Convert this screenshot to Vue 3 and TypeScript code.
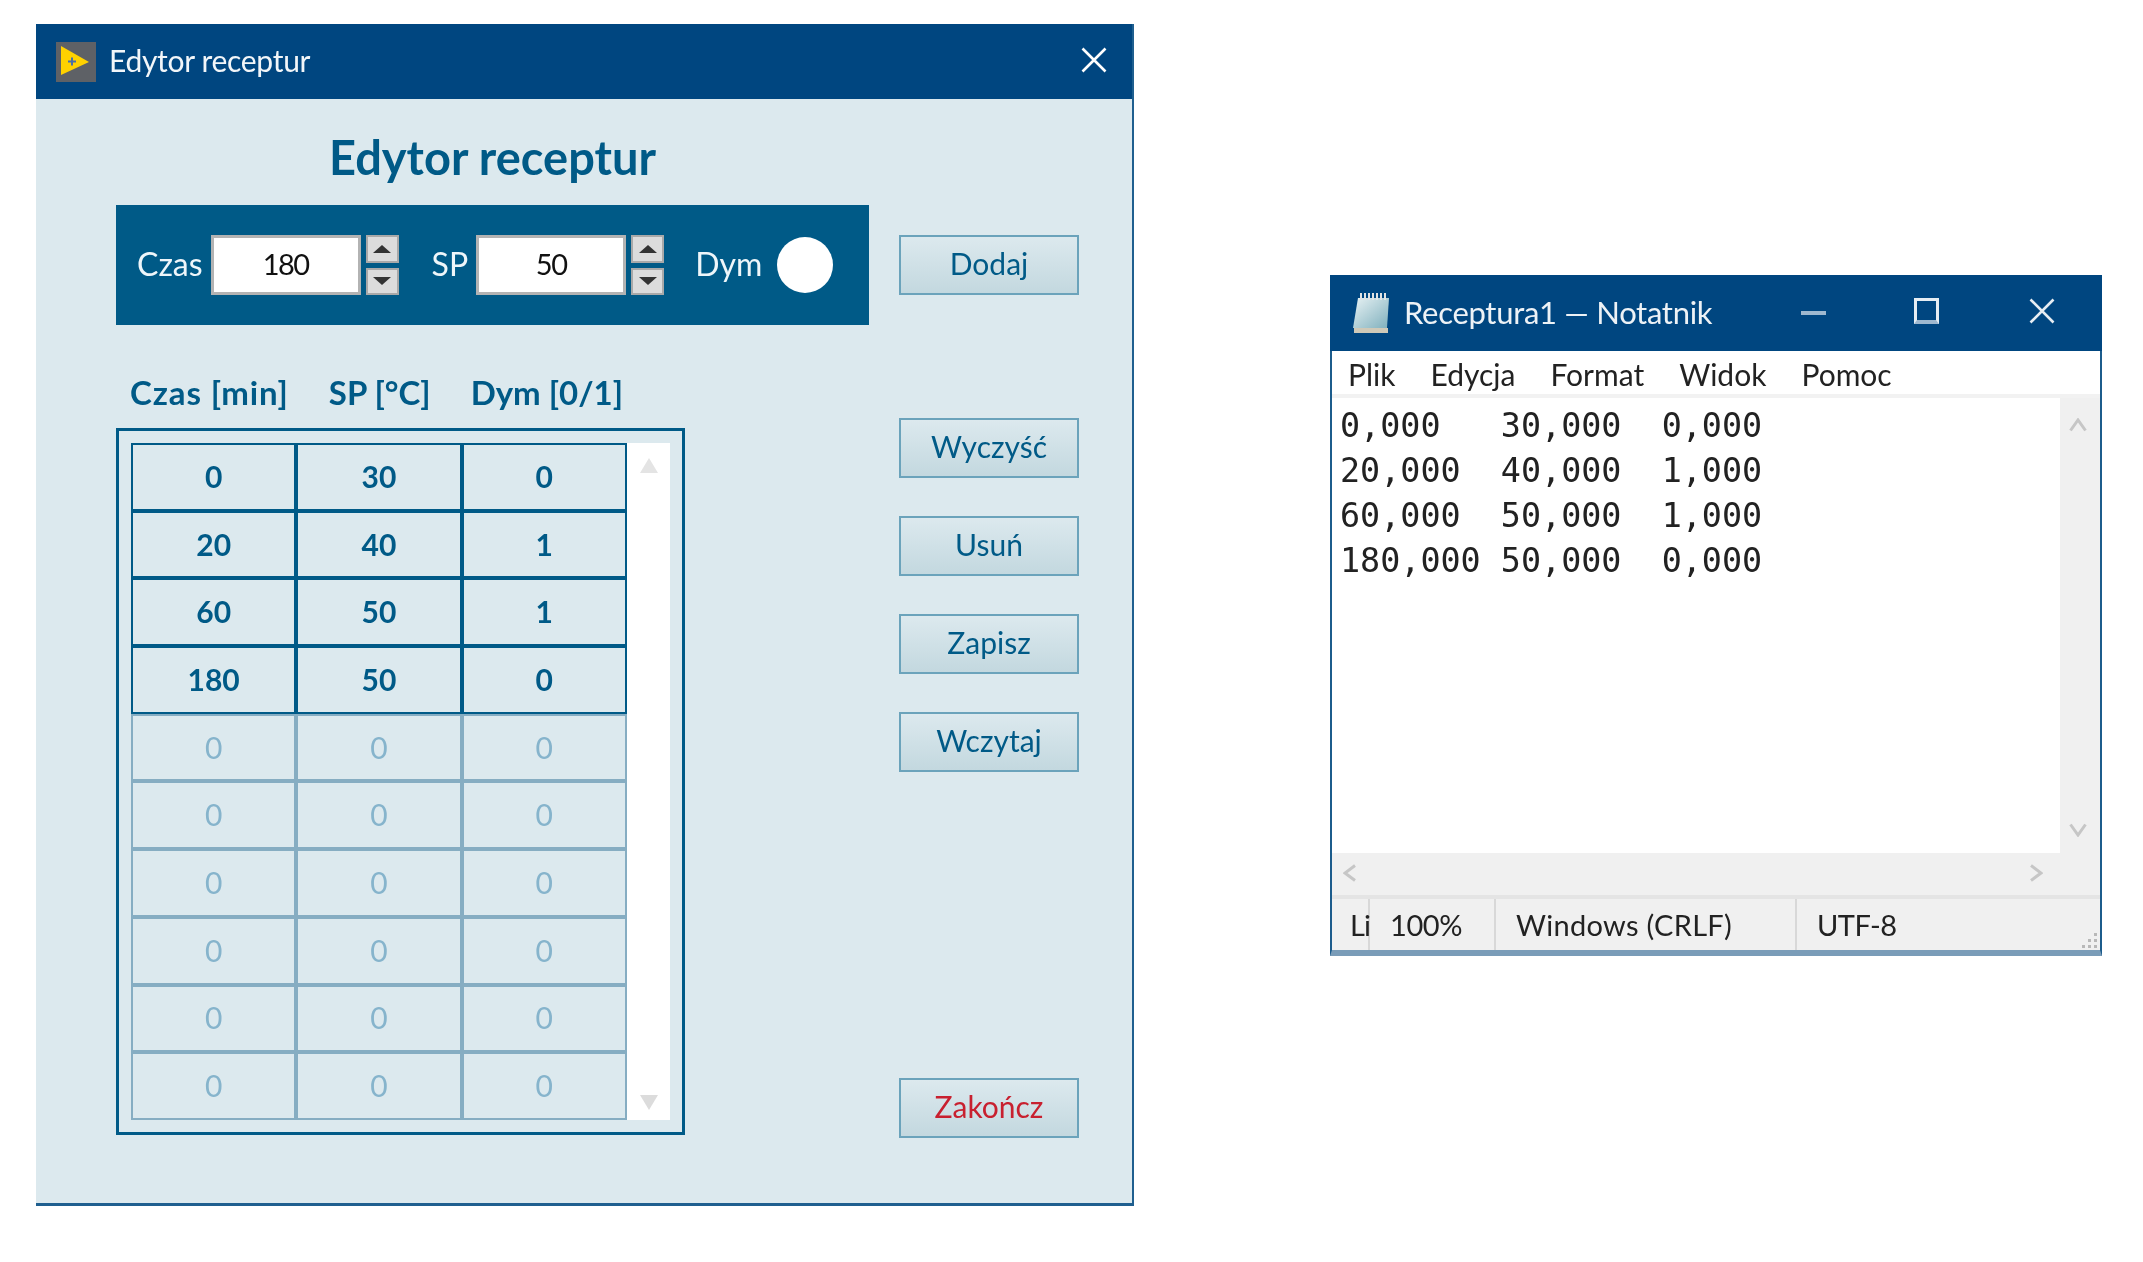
<script setup lang="ts">
interface Row {
  czas: number;
  sp: number;
  dym: number;
}

const filled: Row[] = [
  { czas: 0, sp: 30, dym: 0 },
  { czas: 20, sp: 40, dym: 1 },
  { czas: 60, sp: 50, dym: 1 },
  { czas: 180, sp: 50, dym: 0 },
];
const rows: Row[] = [...filled, ...Array.from({ length: 6 }, () => ({ czas: 0, sp: 0, dym: 0 }))];

const menu = ['Plik', 'Edycja', 'Format', 'Widok', 'Pomoc'];
const fileText = `0,000   30,000  0,000
20,000  40,000  1,000
60,000  50,000  1,000
180,000 50,000  0,000`;
</script>

<template>
  <div class="page">
    <!-- LabVIEW dialog -->
    <section class="editor">
      <header class="titlebar">
        <svg class="lv-icon" viewBox="0 0 40 40">
          <rect width="40" height="40" fill="#5e6166" />
          <path d="M5 4 L33 20 L5 33 Z" fill="#ffd200" />
          <path d="M12 19.500h8M16 15.500v8" stroke="#4a6fa8" stroke-width="2" />
        </svg>
        <span class="titlebar-text">Edytor receptur</span>
        <svg class="close" viewBox="0 0 26 26">
          <path d="M1.500 1.500 L24.500 24.500 M24.500 1.500 L1.500 24.500" stroke="#fff" stroke-width="2.600" />
        </svg>
      </header>

      <div class="editor-body">
        <div class="main-col">
          <h1 class="heading">Edytor receptur</h1>

          <div class="input-panel">
            <div class="field">
              <label class="field-label">Czas</label>
              <div class="num-box">180</div>
              <div class="spinner">
                <button class="spin"><span class="tri-up"></span></button>
                <button class="spin"><span class="tri-down"></span></button>
              </div>
            </div>
            <div class="field">
              <label class="field-label">SP</label>
              <div class="num-box">50</div>
              <div class="spinner">
                <button class="spin"><span class="tri-up"></span></button>
                <button class="spin"><span class="tri-down"></span></button>
              </div>
            </div>
            <div class="field dym">
              <label class="field-label">Dym</label>
              <span class="led"></span>
            </div>
          </div>

          <div class="col-heads">
            <span class="head-czas">Czas [min]</span>
            <span>SP [°C]</span>
            <span>Dym [0/1]</span>
          </div>

          <div class="table-frame">
            <div class="grid">
              <template v-for="(row, i) in rows" :key="i">
                <div class="cell" :class="{ dim: i >= filled.length }">{{ row.czas }}</div>
                <div class="cell" :class="{ dim: i >= filled.length }">{{ row.sp }}</div>
                <div class="cell" :class="{ dim: i >= filled.length }">{{ row.dym }}</div>
              </template>
            </div>
            <div class="table-scroll">
              <span class="scroll-up"></span>
              <span class="scroll-down"></span>
            </div>
          </div>
        </div>

        <div class="btn-col">
          <button class="btn">Dodaj</button>
          <button class="btn first-of-group">Wyczyść</button>
          <button class="btn">Usuń</button>
          <button class="btn">Zapisz</button>
          <button class="btn">Wczytaj</button>
          <button class="btn quit">Zakończ</button>
        </div>
      </div>
    </section>

    <!-- Notepad -->
    <section class="notepad">
      <header class="np-title">
        <svg class="np-icon" viewBox="0 0 38 42">
          <defs>
            <linearGradient id="page" x1="0" y1="0" x2="1" y2="1">
              <stop offset="0" stop-color="#e8f2f4" />
              <stop offset="1" stop-color="#7fb0bd" />
            </linearGradient>
          </defs>
          <path d="M6 6 H37 L35 36 H1 Z" fill="url(#page)" />
          <path d="M2 36 H36 V41 H2 Z" fill="#cfc9b8" />
          <path d="M9 1v7M13 1v7M17 1v7M21 1v7M25 1v7M29 1v7M33 1v7" stroke="#e4e4e4" stroke-width="2" />
        </svg>
        <span class="np-title-text">Receptura1 — Notatnik</span>
        <span class="win-btn min"></span>
        <span class="win-btn max"></span>
        <svg class="win-x" viewBox="0 0 26 26">
          <path d="M1.500 1.500 L24.500 24.500 M24.500 1.500 L1.500 24.500" stroke="#e6edf3" stroke-width="2.600" />
        </svg>
      </header>

      <nav class="np-menu">
        <span v-for="m in menu" :key="m">{{ m }}</span>
      </nav>

      <div class="np-edit">
        <pre class="np-text">{{ fileText }}</pre>
        <div class="np-vscroll">
          <svg viewBox="0 0 18 14"><path d="M1.500 12.500 L9 2 L16.500 12.500" fill="none" stroke="#c6c6c6" stroke-width="3" /></svg>
          <svg viewBox="0 0 18 14"><path d="M1.500 1.500 L9 12 L16.500 1.500" fill="none" stroke="#c6c6c6" stroke-width="3" /></svg>
        </div>
      </div>

      <div class="np-hscroll">
        <svg viewBox="0 0 14 18"><path d="M12 1.500 L2 9 L12 16.500" fill="none" stroke="#c6c6c6" stroke-width="3" /></svg>
        <svg viewBox="0 0 14 18"><path d="M2 1.500 L12 9 L2 16.500" fill="none" stroke="#c6c6c6" stroke-width="3" /></svg>
      </div>

      <footer class="np-status">
        <span class="st st-li">Li</span>
        <span class="st st-zoom">100%</span>
        <span class="st st-eol">Windows (CRLF)</span>
        <span class="st st-enc">UTF-8</span>
        <svg class="grip" viewBox="0 0 18 18">
          <path d="M14 1h3v3h-3zM8 7h3v3H8zM14 7h3v3h-3zM2 13h3v3H2zM8 13h3v3H8zM14 13h3v3h-3z" fill="#b8b8b8" />
        </svg>
      </footer>
    </section>
  </div>
</template>

<style scoped>
.page {
  display: flex;
  align-items: flex-start;
  width: 2143px;
  height: 1262px;
  box-sizing: border-box;
  padding: 24px 0 0 36px;
  background: #fff;
  font-family: Lato, "Open Sans", sans-serif;
  filter: blur(0.45px);
}

/* ---- dialog ---- */
.editor {
  width: 1098px;
  height: 1182px;
  box-sizing: border-box;
  display: flex;
  flex-direction: column;
  background: #dce9ee;
  border-right: 2px solid #1f5f8f;
  border-bottom: 3px solid #1f5f8f;
}

.titlebar {
  height: 75px;
  flex: none;
  display: flex;
  align-items: center;
  background: #004680;
  padding: 0 25px 0 20px;
}

.lv-icon {
  width: 40px;
  height: 40px;
}

.titlebar-text {
  margin: -4px 0 0 13px;
  color: #f2f6f9;
  font-size: 30px;
  letter-spacing: -0.3px;
}

.close {
  width: 26px;
  height: 26px;
  margin-left: auto;
  margin-top: -3px;
}

.editor-body {
  flex: 1;
  display: flex;
  padding-left: 80px;
}

.main-col {
  width: 753px;
}

.heading {
  margin: 0;
  height: 106px;
  line-height: 116px;
  text-align: center;
  color: #005a87;
  font-size: 47px;
  font-weight: 700;
}

.input-panel {
  height: 120px;
  display: flex;
  align-items: center;
  gap: 33px;
  padding-left: 21px;
  background: #005a87;
}

.field {
  display: flex;
  align-items: center;
  gap: 8px;
}

.field.dym {
  gap: 15px;
  margin-left: -2px;
}

.field-label {
  color: #eef6fa;
  font-size: 32px;
  padding-bottom: 4px;
}

.num-box {
  width: 150px;
  height: 60px;
  box-sizing: border-box;
  display: flex;
  align-items: center;
  justify-content: center;
  padding-bottom: 3px;
  background: #fff;
  border: 3px solid #b3b3b3;
  color: #111;
  font-size: 29px;
  letter-spacing: -1.500px;
}

.spinner {
  display: flex;
  flex-direction: column;
  gap: 5px;
  margin-left: -3px;
}

.spin {
  width: 33px;
  height: 27.500px;
  padding: 0;
  box-sizing: border-box;
  display: flex;
  align-items: center;
  justify-content: center;
  background: #dcdcdc;
  border: 2px solid #a9a9a9;
}

.tri-up,
.tri-down {
  width: 0;
  height: 0;
  border-left: 9px solid transparent;
  border-right: 9px solid transparent;
}

.tri-up {
  border-bottom: 8px solid #333;
}

.tri-down {
  border-top: 8px solid #333;
}

.led {
  width: 56px;
  height: 56px;
  border-radius: 50%;
  background: #fff;
}

.col-heads {
  display: flex;
  gap: 40px;
  height: 103px;
  padding: 47px 0 0 14px;
  box-sizing: border-box;
  line-height: 40px;
  color: #005a87;
  font-size: 33px;
  font-weight: 700;
}

.head-czas {
  letter-spacing: 0.900px;
}

.table-frame {
  width: 569px;
  height: 707px;
  box-sizing: border-box;
  display: flex;
  align-items: flex-start;
  padding: 12px;
  border: 3px solid #005a87;
}

.grid {
  width: 496px;
  flex: none;
  display: grid;
  grid-template-columns: repeat(3, 1fr);
  grid-auto-rows: 67.700px;
}

.cell {
  display: flex;
  align-items: center;
  justify-content: center;
  padding-bottom: 2px;
  box-sizing: border-box;
  border: 2.500px solid #005a87;
  color: #005a87;
  font-size: 30px;
  font-weight: 700;
}

.cell.dim {
  border-color: #86adc2;
  color: #86b4cc;
  font-weight: 400;
}

.table-scroll {
  flex: none;
  width: 43px;
  height: 677px;
  display: flex;
  flex-direction: column;
  justify-content: space-between;
  align-items: center;
  padding: 15px 0 10px;
  box-sizing: border-box;
  background: #fff;
}

.scroll-up,
.scroll-down {
  width: 0;
  height: 0;
  border-left: 9px solid transparent;
  border-right: 9px solid transparent;
}

.scroll-up {
  border-bottom: 15px solid #e4e4e4;
}

.scroll-down {
  border-top: 15px solid #dcdcdc;
}

.btn-col {
  width: 180px;
  margin-left: 30px;
  padding-top: 136px;
  display: flex;
  flex-direction: column;
  gap: 38px;
}

.btn {
  height: 60px;
  flex: none;
  padding: 0 0 4px;
  box-sizing: border-box;
  background: linear-gradient(#dce9ee, #c3d8df);
  border: 2.500px solid #6ba3bb;
  color: #005a87;
  font-family: inherit;
  font-size: 30px;
}

.btn.first-of-group {
  margin-top: 85px;
}

.btn.quit {
  margin-top: 268px;
  color: #c8202f;
}

/* ---- notepad ---- */
.notepad {
  width: 772px;
  height: 681px;
  margin: 251px 0 0 196px;
  box-sizing: border-box;
  display: flex;
  flex-direction: column;
  background: #fff;
  border-left: 2px solid #1c5c8c;
  border-right: 2px solid #1c5c8c;
  border-bottom: 6px solid #7a9cb8;
}

.np-title {
  height: 76px;
  flex: none;
  display: flex;
  align-items: center;
  margin: 0 -2px;
  background: #004680;
  color: #edf2f6;
}

.np-icon {
  width: 38px;
  height: 42px;
  margin-left: 22px;
}

.np-title-text {
  margin: -2px 0 0 14px;
  width: 397px;
  font-size: 31px;
  letter-spacing: -0.300px;
}

.win-btn.min {
  width: 25px;
  height: 4px;
  background: #9fb8cf;
}

.win-btn.max {
  width: 25px;
  height: 26px;
  box-sizing: border-box;
  margin-left: 88px;
  margin-top: -4px;
  border: 3px solid #e6edf3;
  border-bottom-color: #9fb8cf;
  border-bottom-width: 4px;
}

.win-x {
  width: 26px;
  height: 26px;
  margin-left: 90px;
  margin-top: -4px;
}

.np-menu {
  height: 47px;
  flex: none;
  box-sizing: border-box;
  display: flex;
  align-items: center;
  padding: 3px 0 0 16px;
  gap: 35px;
  border-bottom: 4px solid #f2f2f2;
  color: #222;
  font-size: 30px;
}

.np-edit {
  height: 455px;
  flex: none;
  display: flex;
}

.np-text {
  flex: 1;
  margin: 0;
  padding: 5px 0 0 8px;
  font-family: "DejaVu Sans Mono", monospace;
  font-size: 33.400px;
  line-height: 45px;
  color: #222;
}

.np-vscroll {
  width: 40px;
  flex: none;
  display: flex;
  flex-direction: column;
  justify-content: space-between;
  align-items: center;
  padding: 20px 5px 16px 0;
  box-sizing: border-box;
  background: #f0f0f0;
}

.np-vscroll svg {
  width: 18px;
  height: 14px;
}

.np-hscroll {
  height: 40px;
  flex: none;
  display: flex;
  justify-content: space-between;
  align-items: center;
  padding: 0 57px 2px 11px;
  background: #f0f0f0;
}

.np-hscroll svg {
  width: 14px;
  height: 18px;
}

.np-status {
  position: relative;
  flex: 1;
  display: flex;
  align-items: center;
  border-top: 4px solid #e4e4e4;
  background: #f0f0f0;
  color: #222;
  font-size: 29px;
}

.st {
  height: 100%;
  box-sizing: border-box;
  display: flex;
  align-items: center;
  border-right: 2px solid #d8d8d8;
}

.st-li {
  width: 38px;
  padding-left: 18px;
  letter-spacing: -1px;
}

.st-zoom {
  width: 126px;
  padding-left: 20px;
  letter-spacing: -0.400px;
}

.st-eol {
  width: 301px;
  padding-left: 20px;
  letter-spacing: 0.300px;
}

.st-enc {
  padding-left: 20px;
  border-right: 0;
  letter-spacing: -0.500px;
}

.grip {
  position: absolute;
  right: 2px;
  bottom: 0;
  width: 18px;
  height: 18px;
}
</style>

<style>
html,
body {
  margin: 0;
  background: #fff;
}
</style>
